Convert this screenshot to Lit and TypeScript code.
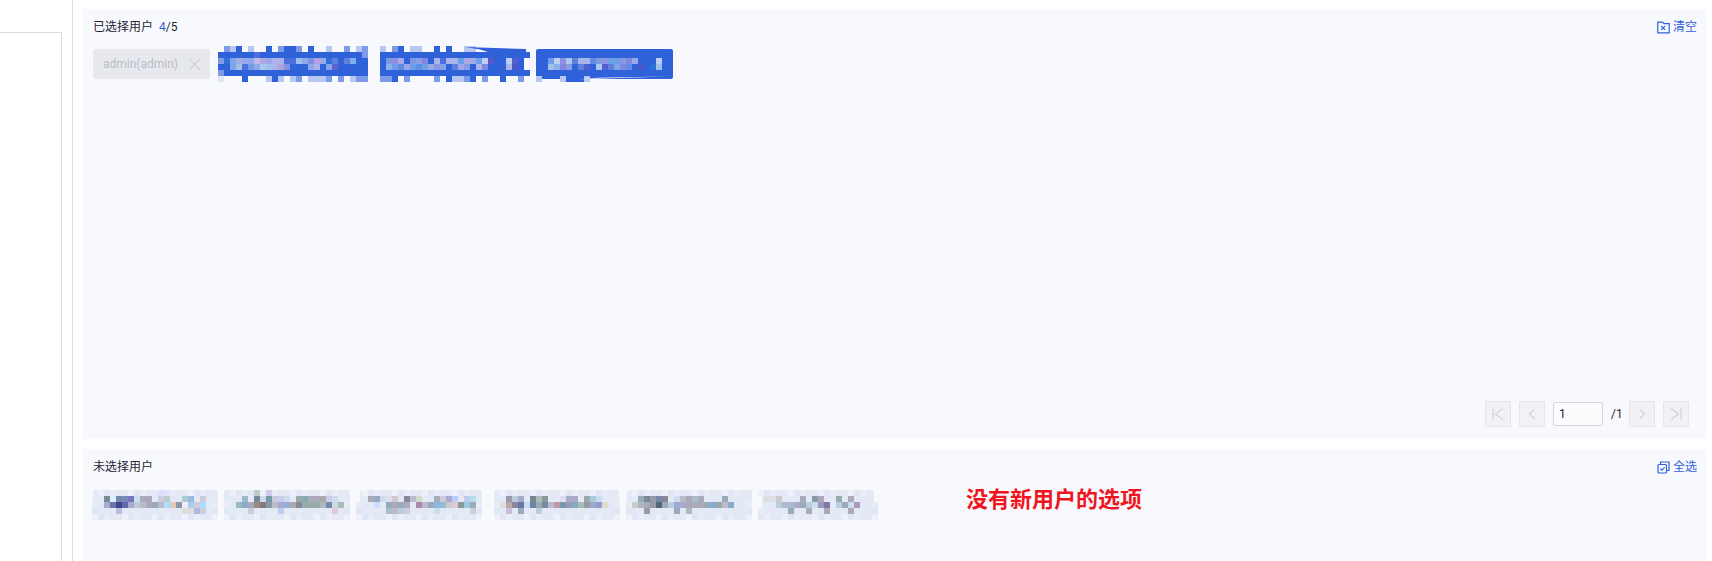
import { LitElement, html, css, svg } from "lit";
import { customElement } from "lit/decorators.js";

const PAL: Record<string, string> = {
  B: "#2f62d9", L: "#b8c6f2", M: "#7d9be8", P: "#dfe6fa",
  a: "#2f6fd8", b: "#7fa4ea", c: "#a0aee8", d: "#98a8e8", e: "#90a8ea", f: "#c0b8e8", g: "#b0a8e0",
  h: "#a8b4ea", i: "#4f70dc", j: "#9abfea", k: "#7f90e0", l: "#b0a0e0", m: "#5f80dd", n: "#80b0ea",
  o: "#a0c0ec", p: "#6f9ee8", q: "#a8c8f0", r: "#6060c8", s: "#8098e4", t: "#8f8fe4", u: "#a8a8e8",
  v: "#8aa0e4", w: "#bcd0f4", x: "#5858c8", y: "#b8d0f8", z: "#5060d0", A: "#8fb0ee", C: "#5f8ce4",
  D: "#5f90e8", E: "#9ca8e4", F: "#8898e4", G: "#7f88dc", H: "#4858c8",
};

interface Mosaic {
  cols: number;
  rows: string[];
  base?: { x: number; y: number; w: number; h: number; fill: string };
  polys?: { points: string; fill: string }[];
  fuzz?: boolean;
}

const PANEL = "#f8f9fd";
const CHIP = "#e4e9f6";

const SELECTED: Mosaic[] = [
  {
    cols: 26,
    rows: [
      ".MLB.L..B.MBBM.B..L..M.LM",
      "BBBBBBiBBBBBBBBBBBBBBBBBM",
      "MabcdefgdhhiijekldamBmnBB",
      "BBboipeqohlkBBBehBbrBBBBB",
      "MBBBBBBBBBBBBBBBBBBBBBBBB",
      "P...B...LBL.LM.LLLM.M.LMM",
    ],
  },
  {
    cols: 25,
    rows: [
      "L.MB.LL..B.B..LL",
      "BBBBBBBBBBBBBBBBBBBBBBBBB",
      "BstuBsvGBhihhpgcpwxBByzB",
      "BApCdpDpEFvBmdFBhGBBBhHB",
      "BBBBBBBBBBBBBBBBBBBBBBBBB",
      "MMB.M....M.BLLMB.M..B..M",
    ],
    polys: [{ points: "85,1 146,3 146,6 108,6 100,3.5", fill: "#2f62d9" }],
  },
  {
    cols: 23,
    base: { x: 0, y: 3, w: 137, h: 30, fill: "#2f62d9" },
    rows: [
      "",
      "",
      "..pwtqmhhCsFppFGdBBByB",
      "..oAGFBmzBqzmbGCBHBao",
      "",
      "L...LBBBL",
    ],
    polys: [{ points: "44,33.2 130,30.6 62,31.8", fill: PANEL }],
  },
];

const UNSELECTED: Mosaic[] = [
  {
    cols: 21,
    fuzz: true,
    base: { x: 1, y: 0, w: 125, h: 30, fill: CHIP },
    rows: [
      "- - - - - - - - - - - ddf",
      "- - 789 def 78a 78b 77b cde aab aab - ccd bcc - - acc 9bd - ccd",
      "- - aac 67a 448 66a aac bcd bbc aab 9ab bbc adf dcb 89a eef ace ccd adf",
      "- - - - bbd - - - - - - - - - - ddd ddd abd ccd",
      "",
    ],
  },
  {
    cols: 21,
    fuzz: true,
    base: { x: 0, y: 0, w: 126, h: 30, fill: CHIP },
    rows: [
      "- - - - - bcc - cce",
      "- - - 9bc - 789 cde 79a ccd cce cde - 9aa 8aa aab aab aaa cce cde",
      "- - 9bb 8ac aab 988 877 89a bbc aac 9ad aaa 889 9aa 9aa 9aa abb 78a cdd abb",
      "- - - - ccd - - - - bce - - - - - - - - dcd",
      "",
    ],
  },
  {
    cols: 21,
    fuzz: true,
    base: { x: 4, y: 0, w: 122, h: 30, fill: CHIP },
    rows: [
      "",
      "- - aab 9ab cde dde ccc - 889 bbc cdc - - aab ccd aac bcf - bce bde",
      "- - - cdf - 9ab aab 9ab aab - a8a bbc 9ab 8bd 9bc ccc dcc 899 9cd 9ab",
      "- - - - - abc bbc bcd ccd - - - - cde - - - - - ccd",
      "",
    ],
  },
  {
    cols: 22,
    fuzz: true,
    base: { x: 6, y: 0, w: 125, h: 30, fill: CHIP },
    rows: [
      "",
      "- - - 99a bcd aac - 788 abb 899 - - dde aac aac - 9aa acd cde",
      "- - ddd baa 889 67a cde 68a 9aa 78a bbc b9a 79a 99b 8ab abb 99a 9ac 99c ddc",
      "- - - cbd - 9ab - - bcd",
      "",
    ],
  },
  {
    cols: 21,
    fuzz: true,
    base: { x: 1, y: 0, w: 125, h: 30, fill: CHIP },
    rows: [
      "",
      "- - 9ab 789 99a 78a 889 - cde bbc aab abc aab - - - 9ab",
      "- ccc abb aab 99a 567 9ab bcd 9ad aac aab aab aab 9ab 8ac 9aa bbc 8ac",
      "- - - 99a - - - - 9ab - abb",
      "",
    ],
  },
  {
    cols: 20,
    fuzz: true,
    base: { x: 4, y: 0, w: 112, h: 30, fill: CHIP },
    rows: [
      "",
      "- ddd dde ccc - - - aab - 89a aab - - 9aa - aab",
      "- - - bcd abc abc aac 9ab bcd cde 99b 87a - bcd 9ab cde a9b",
      "- - - - - 9ab - - aab - - aab - - - aab",
      "",
    ],
  },
];

function tokens(row: string): string[] {
  return row.includes(" ") ? row.split(" ") : [...row];
}

function colour(t: string): string | null {
  if (t === "." || t === "-" || t === "") return null;
  return PAL[t] ?? `#${t}`;
}

/* Pale blotches along the edges of a blurred chip: fixed pattern derived from the cell position. */
function fuzzCell(m: Mosaic, x: number, y: number): string | null {
  const lastRow = m.rows.length - 1;
  const firstCol = Math.floor((m.base?.x ?? 0) / 6);
  const lastCol = m.cols - 1;
  const onEdge = y === 0 || y === lastRow || x === firstCol || x === lastCol;
  if (!onEdge) return null;
  const n = (x * 7 + y * 13 + m.cols * 3) % 5;
  if (n === 0) return "#eef1fa";
  if (n === 2) return "#dfe6f6";
  if (n === 4) return "#e9edf8";
  return null;
}

function mosaic(m: Mosaic) {
  const w = m.cols * 6;
  const h = m.rows.length * 6;
  const fuzz: unknown[] = [];
  if (m.fuzz) {
    m.rows.forEach((_, y) => {
      for (let x = 0; x < m.cols; x++) {
        const c = fuzzCell(m, x, y);
        if (c) fuzz.push(svg`<rect x=${x * 6} y=${y * 6} width="6" height="6" fill=${c}></rect>`);
      }
    });
  }
  return html`<svg class="mosaic" width=${w} height=${h} viewBox="0 0 ${w} ${h}">
    ${m.base
      ? svg`<rect x=${m.base.x} y=${m.base.y} width=${m.base.w} height=${m.base.h} rx="2" fill=${m.base.fill}></rect>`
      : null}
    <g shape-rendering="crispEdges">
      ${fuzz}
      ${m.rows.map((row, y) =>
        tokens(row).map((t, x) => {
          const c = colour(t);
          return c ? svg`<rect x=${x * 6} y=${y * 6} width="6" height="6" fill=${c}></rect>` : null;
        })
      )}
    </g>
    ${(m.polys ?? []).map((p) => svg`<polygon points=${p.points} fill=${p.fill}></polygon>`)}
  </svg>`;
}

const PAGER_ICONS = {
  first: "M3 2.5v11M13 2.5 5.5 8l7.5 5.5",
  prev: "M10.5 3 5.5 8l5 5",
  next: "M5.5 3l5 5-5 5",
  last: "M13 2.5v11M3 2.5 10.5 8 3 13.5",
};

function pagerBtn(d: string) {
  return html`<span class="pg-btn"
    ><svg width="16" height="16" viewBox="0 0 16 16" fill="none" stroke="#d3d5db" stroke-width="1.4"
      ><path d=${d}></path></svg
  ></span>`;
}

@customElement("app-root")
export class AppRoot extends LitElement {
  static styles = css`
    :host {
      display: flex;
      width: 1712px;
      height: 561px;
      overflow: hidden;
      background: #fff;
      font-family: Roboto, "Noto Sans CJK SC", "Liberation Sans", sans-serif;
      font-size: 12px;
      color: #1f2533;
    }
    .left {
      width: 61px;
      margin-top: 32px;
      border-top: 1px solid #dcdde0;
      border-right: 1px solid #dcdde0;
      flex: none;
    }
    .divider {
      width: 1px;
      margin-left: 10px;
      background: #dcdde0;
      flex: none;
    }
    .main {
      width: 1624px;
      margin-left: 10px;
      padding-top: 9px;
      display: flex;
      flex-direction: column;
      gap: 10px;
      flex: none;
    }
    .panel {
      background: #f8f9fd;
      padding: 9px 10px 0;
      position: relative;
      display: flex;
      flex-direction: column;
      box-sizing: border-box;
    }
    .top {
      height: 430px;
    }
    .bottom {
      flex: 1;
    }
    .head {
      display: flex;
      justify-content: space-between;
      align-items: center;
      height: 18px;
      line-height: 18px;
    }
    .title {
      display: flex;
      gap: 6px;
    }
    .blue {
      color: #2f62d9;
    }
    .action {
      display: flex;
      align-items: center;
      gap: 3px;
      color: #2f62d9;
    }
    .action svg {
      display: block;
    }
    .tags {
      display: flex;
      align-items: center;
      gap: 6px;
      margin-top: 10px;
    }
    .tags.grey {
      margin-top: 14px;
      margin-left: -1px;
    }
    .mosaic {
      display: block;
      flex: none;
    }
    .tag {
      display: flex;
      align-items: center;
      justify-content: space-between;
      box-sizing: border-box;
      width: 117px;
      height: 30px;
      margin-right: 2px;
      padding: 0 9px 0 10px;
      border-radius: 2px;
      background: #e8e9ee;
      color: #b9bcc5;
      flex: none;
    }
    .tag svg {
      display: block;
    }
    .pager {
      margin-top: auto;
      margin-bottom: 12px;
      margin-right: 8px;
      display: flex;
      justify-content: flex-end;
      align-items: center;
      gap: 8px;
    }
    .pg-btn {
      width: 26px;
      height: 26px;
      box-sizing: border-box;
      border: 1px solid #e4e6eb;
      border-radius: 2px;
      background: #f1f2f6;
      display: flex;
      align-items: center;
      justify-content: center;
    }
    .pg-input {
      width: 50px;
      height: 24px;
      box-sizing: border-box;
      border: 1px solid #d2d5dc;
      border-radius: 2px;
      background: #fcfcfe;
      padding-left: 5px;
      line-height: 22px;
    }
    .pg-total {
      width: 10px;
    }
    .note {
      position: absolute;
      left: 883px;
      top: 38px;
      font-size: 22px;
      line-height: 26px;
      font-weight: 700;
      color: #f0141e;
      white-space: nowrap;
    }
  `;

  render() {
    return html`
      <div class="left"></div>
      <div class="divider"></div>
      <div class="main">
        <section class="panel top">
          <div class="head">
            <div class="title">
              <span>已选择用户</span>
              <span><span class="blue">4</span>/5</span>
            </div>
            <div class="action">
              <svg width="13" height="13" viewBox="0 0 13 13" fill="none" stroke="#2f62d9" stroke-width="1.2">
                <path d="M.8 1.2h4.7L7 2.6h5.2v9.2H.8z"></path>
                <path d="M4.2 4.8l4 4m0-4l-4 4"></path>
              </svg>
              <span>清空</span>
            </div>
          </div>
          <div class="tags">
            <div class="tag">
              <span>admin(admin)</span>
              <svg width="13" height="13" viewBox="0 0 13 13" fill="none" stroke="#cfd1d8" stroke-width="1.2">
                <path d="M1 1l11 11M12 1 1 12"></path>
              </svg>
            </div>
            ${SELECTED.map(mosaic)}
          </div>
          <div class="pager">
            ${pagerBtn(PAGER_ICONS.first)} ${pagerBtn(PAGER_ICONS.prev)}
            <div class="pg-input">1</div>
            <span class="pg-total">/1</span>
            ${pagerBtn(PAGER_ICONS.next)} ${pagerBtn(PAGER_ICONS.last)}
          </div>
        </section>
        <section class="panel bottom">
          <div class="head">
            <div class="title"><span>未选择用户</span></div>
            <div class="action">
              <svg width="13" height="13" viewBox="0 0 13 13" fill="none" stroke="#2f62d9" stroke-width="1.2">
                <rect x="1" y="3.5" width="8.5" height="8.5" rx="1"></rect>
                <path d="M3.5 3.2V1h8.5v8.5H9.8"></path>
                <path d="M3.2 7.6l1.6 1.6 2.8-2.8"></path>
              </svg>
              <span>全选</span>
            </div>
          </div>
          <div class="tags grey">${UNSELECTED.map(mosaic)}</div>
          <div class="note">没有新用户的选项</div>
        </section>
      </div>
    `;
  }
}
